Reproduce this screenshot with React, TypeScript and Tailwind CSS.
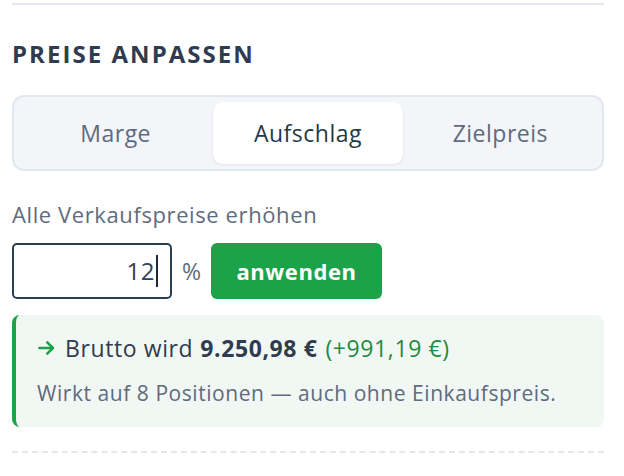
export default function App() {
  const tabs = ["Marge", "Aufschlag", "Zielpreis"];
  const active = "Aufschlag";

  return (
    <div className="w-[624px] h-[476px] bg-white pl-3 pr-[20px] pt-[3px]" style={{ fontFamily: "'Open Sans', 'Noto Sans', sans-serif" }}>
      <div className="border-t-2 border-[#e3e8ef]" />

      <h2 className="mt-[35px] text-[24px] font-bold tracking-[0.085em] text-[#2f3b4e] leading-[28px]">
        PREISE ANPASSEN
      </h2>

      {/* segmented control */}
      <div className="mt-[27px] grid grid-cols-3 gap-[3px] rounded-[12px] border-2 border-[#e3e8ef] bg-[#f3f5f9] px-[7px] py-[5px]">
        {tabs.map((t) => (
          <button
            key={t}
            className={
              t === active
                ? "h-[62px] rounded-[10px] bg-white text-[23px] tracking-[0.5px] text-[#1f3a48] shadow-[0_1px_3px_rgba(15,23,42,0.08)]"
                : "h-[62px] rounded-[10px] text-[23px] tracking-[0.5px] text-[#5f6b7e]"
            }
          >
            {t}
          </button>
        ))}
      </div>

      <p className="mt-[30px] text-[22px] tracking-[0.6px] text-[#5f6b7e] leading-[26px]">Alle Verkaufspreise erhöhen</p>

      <div className="mt-[16px] flex items-center gap-[10px]">
        <div className="flex h-[56px] w-[160px] items-center justify-end rounded-[5px] border-2 border-[#2c3f4f] pr-[12px]">
          <span className="text-[24px] tracking-[0.5px] text-[#334155]">12</span>
          <span className="ml-[1px] h-[32px] w-[2px] bg-[#1f2937]" />
        </div>
        <span className="text-[23px] text-[#5f6b7e]">%</span>
        <button className="h-[56px] w-[171px] rounded-[6px] bg-[#1ca34a] text-[22px] tracking-[0.6px] font-bold text-white">
          anwenden
        </button>
      </div>

      {/* result box */}
      <div className="mt-[16px] rounded-[8px] border-l-4 border-[#1ca34a] bg-[#f1f7f3] pl-[21px] pr-4 pt-[19px] pb-[21px]">
        <div className="flex items-center text-[23px] tracking-[0.6px] text-[#2f3b4e] leading-[28px]">
          <svg width="19" height="18" viewBox="0 0 24 24" fill="none" stroke="#1ca34a" strokeWidth="3.4" strokeLinecap="round" strokeLinejoin="round" className="mr-[9px]">
            <path d="M2.5 12h18" />
            <path d="M13 4.5l7.5 7.5-7.5 7.5" />
          </svg>
          <span>Brutto wird</span>
          <span className="ml-[7px] font-bold">9.250,98 €</span>
          <span className="ml-[8px] text-[#1f8a3f]">(+991,19 €)</span>
        </div>
        <p className="mt-[18px] text-[21px] tracking-[0.55px] text-[#5f6b7e] leading-[26px]">
          Wirkt auf 8 Positionen — auch ohne Einkaufspreis.
        </p>
      </div>

      <div className="mt-[24px] border-t-2 border-dashed border-[#e3e8ef]" />
    </div>
  );
}
